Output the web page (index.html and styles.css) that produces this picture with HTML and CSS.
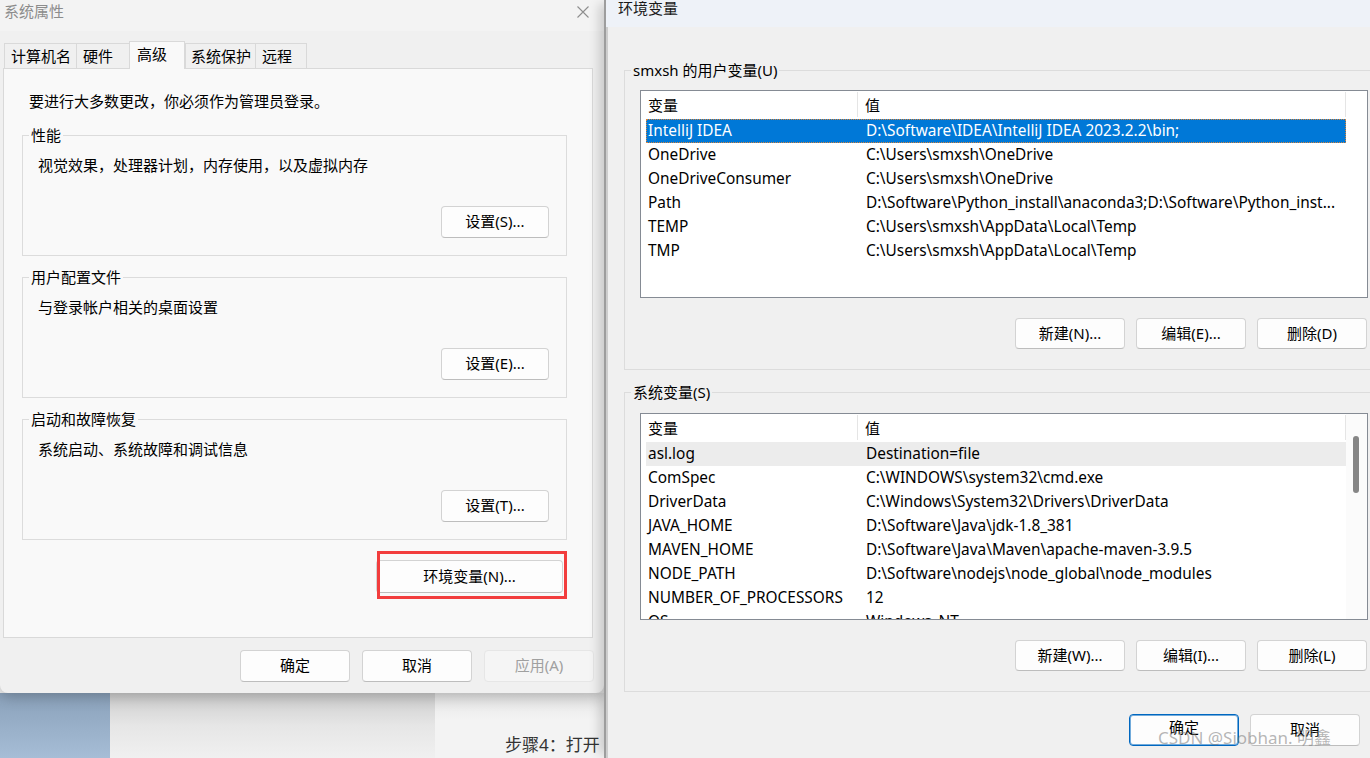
FILE: index.html
```html
<!DOCTYPE html>
<html>
<head>
<meta charset="utf-8">
<link rel="stylesheet" href="styles.css">
</head>
<body>
    <div class="desktop">
        <div class="wall"></div>
        <div class="page"></div>
        <div class="doc"><span class="doc-text">步骤4：打开</span></div>
    </div>

    <div class="sys">
        <div class="sys-title">
            <span>系统属性</span>
            <svg class="close" width="14" height="14" viewBox="0 0 14 14">
                <path d="M1.5 1.5 L12.5 12.5 M12.5 1.5 L1.5 12.5" stroke="#8e8e8e" stroke-width="1.1" fill="none"/>
            </svg>
        </div>

        <div class="tabs">
            <div class="tab tab-name">计算机名</div>
            <div class="tab tab-hw">硬件</div>
            <div class="tab tab-adv active">高级</div>
            <div class="tab tab-prot">系统保护</div>
            <div class="tab tab-remote">远程</div>
        </div>

        <div class="panel">
            <p class="notice">要进行大多数更改，你必须作为管理员登录。</p>

            <fieldset class="grp">
                <legend>性能</legend>
                <p>视觉效果，处理器计划，内存使用，以及虚拟内存</p>
                <div class="grp-act"><button class="btn btn-set">设置(S)...</button></div>
            </fieldset>

            <fieldset class="grp">
                <legend>用户配置文件</legend>
                <p>与登录帐户相关的桌面设置</p>
                <div class="grp-act"><button class="btn btn-set">设置(E)...</button></div>
            </fieldset>

            <fieldset class="grp">
                <legend>启动和故障恢复</legend>
                <p>系统启动、系统故障和调试信息</p>
                <div class="grp-act"><button class="btn btn-set">设置(T)...</button></div>
            </fieldset>

            <div class="env-row">
                <span class="mark-wrap">
                    <button class="btn btn-env">环境变量(N)...</button>
                    <span class="mark"></span>
                </span>
            </div>
        </div>

        <div class="sys-foot">
            <button class="btn btn-foot">确定</button>
            <button class="btn btn-foot">取消</button>
            <button class="btn btn-foot" disabled>应用(A)</button>
        </div>
    </div>

    <div class="env">
        <div class="env-title">环境变量</div>

        <fieldset class="vars">
            <legend>smxsh 的用户变量(U)</legend>
            <div class="list list-user">
                <div class="list-body">
                    <div class="list-head"><span class="h1">变量</span><span class="h2">值</span></div>
                    <div class="row selected"><span class="c1">IntelliJ IDEA</span><span class="c2">D:\Software\IDEA\IntelliJ IDEA 2023.2.2\bin;</span></div>
                    <div class="row"><span class="c1">OneDrive</span><span class="c2">C:\Users\smxsh\OneDrive</span></div>
                    <div class="row"><span class="c1">OneDriveConsumer</span><span class="c2">C:\Users\smxsh\OneDrive</span></div>
                    <div class="row"><span class="c1">Path</span><span class="c2">D:\Software\Python_install\anaconda3;D:\Software\Python_inst...</span></div>
                    <div class="row"><span class="c1">TEMP</span><span class="c2">C:\Users\smxsh\AppData\Local\Temp</span></div>
                    <div class="row"><span class="c1">TMP</span><span class="c2">C:\Users\smxsh\AppData\Local\Temp</span></div>
                </div>
            </div>
            <div class="actions">
                <button class="btn btn-act">新建(N)...</button>
                <button class="btn btn-act">编辑(E)...</button>
                <button class="btn btn-act">删除(D)</button>
            </div>
        </fieldset>

        <fieldset class="vars vars-sys">
            <legend>系统变量(S)</legend>
            <div class="list list-sys">
                <div class="list-body">
                    <div class="list-head"><span class="h1">变量</span><span class="h2">值</span></div>
                    <div class="row hover"><span class="c1">asl.log</span><span class="c2">Destination=file</span></div>
                    <div class="row"><span class="c1">ComSpec</span><span class="c2">C:\WINDOWS\system32\cmd.exe</span></div>
                    <div class="row"><span class="c1">DriverData</span><span class="c2">C:\Windows\System32\Drivers\DriverData</span></div>
                    <div class="row"><span class="c1">JAVA_HOME</span><span class="c2">D:\Software\Java\jdk-1.8_381</span></div>
                    <div class="row"><span class="c1">MAVEN_HOME</span><span class="c2">D:\Software\Java\Maven\apache-maven-3.9.5</span></div>
                    <div class="row"><span class="c1">NODE_PATH</span><span class="c2">D:\Software\nodejs\node_global\node_modules</span></div>
                    <div class="row"><span class="c1">NUMBER_OF_PROCESSORS</span><span class="c2">12</span></div>
                    <div class="row"><span class="c1">OS</span><span class="c2">Windows_NT</span></div>
                </div>
                <div class="scroll"><div class="thumb"></div></div>
            </div>
            <div class="actions">
                <button class="btn btn-act">新建(W)...</button>
                <button class="btn btn-act">编辑(I)...</button>
                <button class="btn btn-act">删除(L)</button>
            </div>
        </fieldset>

        <div class="env-foot">
            <button class="btn btn-foot default">确定</button>
            <button class="btn btn-foot">取消</button>
        </div>
    </div>

    <div class="watermark">CSDN @Siobhan. 明鑫</div>
</body>
</html>
```

FILE: styles.css
```css
* {
    box-sizing: border-box;
}
body {
    margin: 0;
    width: 1370px;
    height: 758px;
    overflow: hidden;
    position: relative;
    background: #f0f0f0;
    font-family: "Noto Sans", "Noto Sans CJK SC", sans-serif;
    font-size: 15px;
    line-height: 20px;
    color: #000;
}
p {
    margin: 0;
}

/* desktop behind the windows */
.desktop {
    position: absolute;
    left: 0;
    top: 693px;
    width: 608px;
    height: 65px;
    display: flex;
}
.wall {
    width: 110px;
    background: linear-gradient(#8aa1ba, #a6bdd6);
}
.page {
    width: 325px;
    background: linear-gradient(#cdcdcd, #e6e6e6 50%, #f0f0f0);
}
.doc {
    flex: 1;
    background: linear-gradient(#e4e4e4, #f3f3f3 40%);
    display: flex;
    align-items: flex-end;
    padding: 0 0 2px 70px;
}
.doc-text {
    font-size: 17px;
    line-height: 22px;
    color: #333;
    white-space: nowrap;
}

/* 系统属性 */
.sys {
    position: absolute;
    left: 0;
    top: 0;
    width: 604px;
    height: 693px;
    background: #f0f0f0;
    border-radius: 0 0 8px 8px;
    box-shadow: 0 4px 14px rgba(0, 0, 0, 0.22);
    z-index: 1;
}
.sys-title {
    height: 31px;
    background: #f3f3f3;
    padding: 1px 0 0 4px;
    color: #8c8c8c;
    display: flex;
    justify-content: space-between;
}
.close {
    margin: 4px 14px 0 0;
}
.tabs {
    display: flex;
    align-items: flex-end;
    height: 27px;
    margin-top: 10px;
    padding-left: 4px;
    position: relative;
    z-index: 1;
}
.tab {
    height: 25px;
    border: 1px solid #d9d9d9;
    border-bottom: none;
    border-right: none;
    padding: 2px 0 0 6px;
    background: #f0f0f0;
    white-space: nowrap;
}
.tab-name { width: 72px; }
.tab-hw { width: 53px; }
.tab-adv { width: 56px; }
.tab-prot { width: 70px; padding-left: 5px; }
.tab-remote { width: 52px; border-right: 1px solid #d9d9d9; }
.tab.active {
    height: 28px;
    margin-bottom: -1px;
    background: #f9f9f9;
    border-right: 1px solid #d9d9d9;
    padding-left: 7px;
}
.panel {
    height: 570px;
    margin: 0 11px 0 3px;
    border: 1px solid #d9d9d9;
    background: #f9f9f9;
    padding: 0 25px 0 18px;
}
.notice {
    margin: 22px 0 0 7px;
}
.grp {
    margin: 11px 0 0;
    min-width: 0;
    border: 1px solid #dcdcdc;
    padding: 10px 17px 17px 15px;
}
.notice + .grp {
    margin-top: 14px;
}
legend {
    padding: 0 2px;
    margin-left: -9px;
    line-height: 20px;
}
.grp-act {
    display: flex;
    justify-content: flex-end;
    margin-top: 31px;
}
.btn {
    font-family: inherit;
    font-size: 15px;
    line-height: 20px;
    color: #000;
    background: #fdfdfd;
    border: 1px solid #d3d3d3;
    border-bottom-color: #bdbdbd;
    border-radius: 4px;
    padding: 0 0 2px;
    white-space: nowrap;
}
.btn:disabled {
    background: #f5f5f5;
    border-color: #e6e6e6;
    color: #a0a0a0;
}
.btn-set {
    width: 108px;
    height: 32px;
}
.env-row {
    display: flex;
    justify-content: flex-end;
    margin-top: 20px;
    padding-right: 4px;
}
.mark-wrap {
    position: relative;
    display: flex;
}
.btn-env {
    width: 187px;
    height: 33px;
}
.mark {
    position: absolute;
    left: 1px;
    right: -4px;
    top: -9px;
    bottom: -6px;
    border: 3px solid #f23d3d;
}
.sys-foot {
    display: flex;
    justify-content: flex-end;
    gap: 12px;
    margin-top: 12px;
    padding-right: 10px;
}
.btn-foot {
    width: 110px;
    height: 32px;
}

/* 环境变量 */
.env {
    position: absolute;
    left: 604px;
    top: 0;
    width: 798px;
    height: 758px;
    background: #f0f0f0;
    border-left: 2px solid #9d9d9d;
    box-shadow: inset 2px 0 0 #cdcdcd, -9px 0 10px -4px rgba(0, 0, 0, 0.16);
    z-index: 2;
}
.env-title {
    height: 27px;
    background: #eef2f8;
    padding-left: 12px;
    line-height: 16px;
    color: #1a1a1a;
}
.vars {
    margin: 33px 18px 0;
    min-width: 0;
    border: 1px solid #dcdcdc;
    padding: 10px 15px 20px;
}
.vars-sys {
    margin-top: 12px;
    padding-top: 11px;
}
.list {
    height: 208px;
    border: 1px solid #858b94;
    background: #fff;
    display: flex;
    overflow: hidden;
}
.list-sys {
    height: 207px;
}
.list-body {
    width: 705px;
    padding-top: 1px;
    overflow: hidden;
}
.list-head {
    display: flex;
    height: 27px;
    line-height: 26px;
}
.h1 {
    width: 217px;
    padding-left: 7px;
    border-right: 1px solid #e5e5e5;
    margin-bottom: 2px;
}
.h2 {
    flex: 1;
    padding-left: 7px;
    border-right: 1px solid #e5e5e5;
    margin-bottom: 2px;
}
.row {
    display: flex;
    width: 700px;
    height: 24px;
    margin-left: 5px;
    font-size: 15.4px;
    line-height: 23px;
    white-space: nowrap;
}
.c1 {
    width: 212px;
    padding-left: 2px;
    overflow: hidden;
}
.c2 {
    flex: 1;
    padding-left: 8px;
    padding-right: 6px;
    overflow: hidden;
    text-overflow: ellipsis;
}
.row.selected {
    background: #0078d7;
    color: #fff;
    outline: 1px dotted #d9843a;
    outline-offset: -1px;
}
.row.hover {
    background: #ececec;
}
.scroll {
    width: 21px;
    background: #fbfbfb;
    padding: 22px 0 0 7px;
}
.thumb {
    width: 6px;
    height: 57px;
    border-radius: 3px;
    background: #868686;
}
.actions {
    display: flex;
    justify-content: flex-end;
    gap: 11px;
    margin-top: 20px;
    padding-right: 1px;
}
.btn-act {
    width: 110px;
    height: 31px;
}
.env-foot {
    display: flex;
    justify-content: flex-end;
    gap: 11px;
    margin-top: 22px;
    padding-right: 42px;
}
.btn-foot.default {
    border: 1px solid #0067c0;
    box-shadow: inset 0 0 0 1px rgba(0, 103, 192, 0.55);
    padding-bottom: 6px;
}

.watermark {
    position: absolute;
    left: 1158px;
    top: 727px;
    font-size: 17px;
    line-height: 22px;
    color: rgba(120, 120, 120, 0.55);
    z-index: 3;
    white-space: nowrap;
}
```
